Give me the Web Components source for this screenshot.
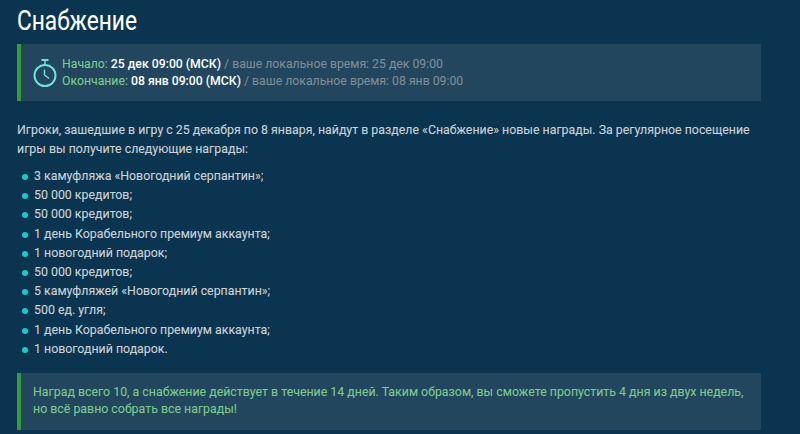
<!DOCTYPE html>
<html><head><meta charset="utf-8">
<style>
html,body{margin:0;padding:0;background:#0a344f;height:434px;overflow:hidden}
</style></head><body>
<template id="t-article"><style>
:host{display:block;width:744px;margin-left:17px;font:12.36px/19.2px Roboto,sans-serif;color:#cdd3d7;-webkit-text-stroke:.1px currentColor}
h1{margin:0;padding-top:6px;height:44px;box-sizing:border-box;font:400 27px/30px Roboto,sans-serif;color:#fff}
h1 span{display:inline-block;transform:scaleX(.84);transform-origin:0 0}
</style><h1><span><slot name="title"></slot></span></h1><slot></slot></template>
<template id="t-note"><style>
:host{display:flex;align-items:center;box-sizing:border-box;background:#21465d;border-left:4px solid #359c3a;color:#7fc98f;height:57px;padding:0 12px;line-height:17px}
</style><slot></slot></template>
<template id="t-li"><style>
:host{display:block;position:relative;padding-left:17px;height:19.2px}
:host::before{content:"";position:absolute;left:5px;top:7px;width:6px;height:6px;border-radius:50%;background:#14cdc8}
</style><slot></slot></template>
<template id="t-times"><style>
:host{display:flex;align-items:center;gap:5px;line-height:17px;font-size:12.25px}
svg{display:block;flex:none}
b{font-weight:500;color:#fff;-webkit-text-stroke:0}
.m{color:#7f8c95}
</style>
<svg width="24" height="28" viewBox="0 0 24 28" fill="none" stroke="#72dede"><path d="M8.500 1h7" stroke-width="2"/><path d="M12 1v5" stroke-width="1.500"/><circle cx="12" cy="16.500" r="10.500" stroke-width="2"/><path d="M11.500 10.500V16l4.500 3.500" stroke-width="1.500"/></svg>
<div><div>Начало: <b>25 дек 09:00 (МСК)</b> <span class="m">/ ваше локальное время: 25 дек 09:00</span></div>
<div>Окончание: <b>08 янв 09:00 (МСК)</b> <span class="m">/ ваше локальное время: 08 янв 09:00</span></div></div></template>
<x-article>
<span slot="title">Снабжение</span>
<x-note><x-times></x-times></x-note>
<x-para>Игроки, зашедшие в игру с 25 декабря по 8 января, найдут в разделе «Снабжение» новые награды. За регулярное посещение игры вы получите следующие награды:</x-para>
<x-list>
<x-li>3 камуфляжа «Новогодний серпантин»;</x-li>
<x-li>50 000 кредитов;</x-li>
<x-li>50 000 кредитов;</x-li>
<x-li>1 день Корабельного премиум аккаунта;</x-li>
<x-li>1 новогодний подарок;</x-li>
<x-li>50 000 кредитов;</x-li>
<x-li>5 камуфляжей «Новогодний серпантин»;</x-li>
<x-li>500 ед. угля;</x-li>
<x-li>1 день Корабельного премиум аккаунта;</x-li>
<x-li>1 новогодний подарок.</x-li>
</x-list>
<x-note class="end"><span style="display:block;max-width:722px">Наград всего 10, а снабжение действует в течение 14 дней. Таким образом, вы сможете пропустить 4 дня из двух недель, но всё равно собрать все награды!</span></x-note>
</x-article>
<script>
function def(name,tpl,css){customElements.define(name,class extends HTMLElement{constructor(){super();const s=this.attachShadow({mode:'open'});
if(tpl)s.appendChild(document.getElementById(tpl).content.cloneNode(true));
else s.innerHTML='<style>'+css+'</style><slot></slot>';}});}
def('x-article','t-article');def('x-note','t-note');def('x-li','t-li');def('x-times','t-times');
def('x-para',null,':host{display:block;margin:20px 0 9px;line-height:18.5px}');
def('x-list',null,':host{display:block;margin-bottom:14px}');
</script>
</body></html>
